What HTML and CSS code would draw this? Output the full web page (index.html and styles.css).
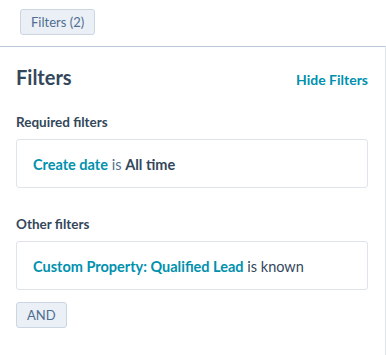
FILE: index.html
```html
<!DOCTYPE html>
<html lang="en">
<head>
    <meta charset="UTF-8">
    <meta name="viewport" content="width=device-width, initial-scale=1.0">
    <title>Filters</title>
    <link rel="stylesheet" href="styles.css">
</head>
<body>

    <div class="toolbar">
        <button class="btn-light">Filters (2)</button>
    </div>

    <section class="filter-panel">
        <header class="panel-header">
            <h1>Filters</h1>
            <a href="#" class="link">Hide Filters</a>
        </header>

        <h2>Required filters</h2>
        <div class="filter-card">
            <span class="prop">Create date</span> <span class="op">is</span> <strong>All time</strong>
        </div>

        <h2 class="other">Other filters</h2>
        <div class="filter-card">
            <span class="prop">Custom Property: Qualified Lead</span> <span class="op known">is known</span>
        </div>

        <button class="btn-light btn-and">AND</button>
    </section>

</body>
</html>
```

FILE: styles.css
```css
body {
    margin: 0;
    font-family: Lato, "Noto Sans", sans-serif;
    color: #33475b;
    background-color: #fff;
    width: 386px;
    height: 355px;
    overflow: hidden;
}
.toolbar {
    padding: 9px 20px 11px;
    height: 26px;
}
.btn-light {
    font-family: inherit;
    font-size: 13px;
    color: #506e91;
    background-color: #eaf0f6;
    border: 1px solid #cbd6e2;
    border-radius: 3px;
    height: 26px;
    padding: 0 10px;
}
.filter-panel {
    box-sizing: border-box;
    border-top: 1px solid #b9c7d6;
    border-right: 1px solid #dfe3eb;
    padding: 18px 17px 0 16px;
    height: 309px;
}
.panel-header {
    display: flex;
    justify-content: space-between;
    align-items: baseline;
}
.panel-header h1 {
    margin: 0;
    font-size: 20px;
    font-weight: 700;
}
.link {
    color: #0091ae;
    font-size: 14px;
    font-weight: 700;
    text-decoration: none;
}
h2 {
    margin: 25px 0 9px;
    font-size: 13.5px;
    font-weight: 700;
}
h2.other {
    margin-top: 28px;
}
.filter-card {
    border: 1px solid #dfe3eb;
    border-radius: 3px;
    padding: 16px 16px 14px;
    font-size: 14.5px;
    line-height: 17px;
}
.prop {
    color: #0091ae;
    font-weight: 700;
}
.op {
    color: #516f90;
}
.known {
    color: #33475b;
}
.btn-and {
    margin-top: 12px;
    height: 26px;
    padding: 0 10px;
}
```
